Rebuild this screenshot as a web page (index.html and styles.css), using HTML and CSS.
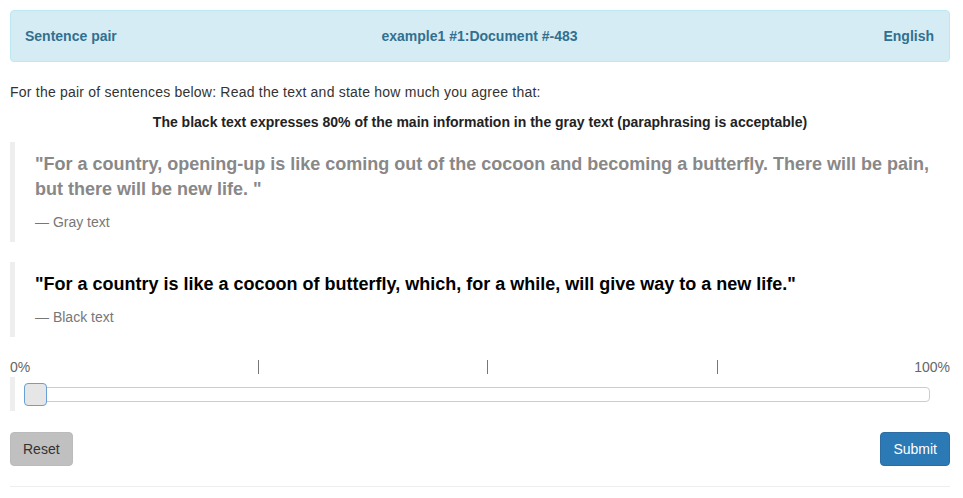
FILE: index.html
```html
<!DOCTYPE html>
<html>

<head>
    <title> Sentence pair </title>
    <link rel="stylesheet" href="styles.css">
</head>

<body>
    <div class="container">
        <div class="task-header">
            <span class="left">Sentence pair</span>
            <span class="middle">example1 #1:Document #-483</span>
            <span class="right">English</span>
        </div>

        <p class="intro">For the pair of sentences below: Read the text and state how much you agree that:</p>
        <p class="question">The black text expresses 80% of the main information in the gray text (paraphrasing is acceptable)</p>

        <blockquote class="quote gray">
            <p>"For a country, opening-up is like coming out of the cocoon and becoming a butterfly. There will be pain, but there will be new life. "</p>
            <footer>Gray text</footer>
        </blockquote>

        <blockquote class="quote black">
            <p>"For a country is like a cocoon of butterfly, which, for a while, will give way to a new life."</p>
            <footer>Black text</footer>
        </blockquote>

        <!-- slider scale -->
        <div class="scale-labels">
            <span>0%</span>
            <span><span class="tick"></span></span>
            <span><span class="tick"></span></span>
            <span><span class="tick"></span></span>
            <span>100%</span>
        </div>
        <div class="slider-row">
            <div class="track">
                <div class="thumb"></div>
            </div>
        </div>

        <div class="buttons">
            <button class="btn btn-reset">Reset</button>
            <button class="btn btn-submit">Submit</button>
        </div>

        <hr>
    </div>
</body>

</html>
```

FILE: styles.css
```css
body {
    margin: 0;
    padding: 0;
    background-color: white;
    color: #333;
    font-family: "Liberation Sans", Helvetica, Arial, sans-serif;
    font-size: 14px;
    line-height: 20px;
}

.container {
    width: 940px;
    padding: 10px;
}

.task-header {
    display: grid;
    grid-template-columns: 1fr 1fr 1fr;
    padding: 15px 15px 15px 14px;
    background-color: #d6ecf5;
    border: 1px solid #bce8f1;
    border-radius: 4px;
    color: #31708f;
    font-weight: bold;
}

.task-header .middle {
    text-align: center;
    white-space: nowrap;
}

.task-header .right {
    text-align: right;
}

.intro {
    margin: 20px 0 10px 0;
    letter-spacing: 0.22px;
}

.question {
    margin: 0 0 10px 0;
    text-align: center;
    font-weight: bold;
    color: #222;
}

.quote {
    margin: 0 0 20px 0;
    padding: 10px 20px;
    border-left: 5px solid #eee;
}

.quote p {
    margin: 0 0 10px 0;
    font-size: 18px;
    line-height: 25px;
    font-weight: bold;
}

.quote.gray p {
    color: #888;
}

.quote.black p {
    color: #000;
}

.quote footer {
    color: #777;
    font-size: 14px;
    line-height: 20px;
}

.quote footer:before {
    content: "\2014 \00A0";
}

.scale-labels {
    display: grid;
    grid-template-columns: 248px 229px 230px 1fr auto;
    color: #666;
}

.tick {
    display: inline-block;
    width: 1px;
    height: 14px;
    margin-top: 3px;
    vertical-align: top;
    background-color: #777;
}

.slider-row {
    display: flex;
    align-items: center;
    height: 34px;
    padding: 0 20px 0 9px;
    border-left: 5px solid #eee;
}

.track {
    position: relative;
    flex: 1;
    height: 13px;
    border: 1px solid #ccc;
    border-radius: 4px;
    background-color: white;
}

.thumb {
    position: absolute;
    left: -1px;
    top: -5px;
    width: 21px;
    height: 21px;
    background-color: #e6e6e6;
    border: 1px solid #6a9fd4;
    border-radius: 4px;
}

.buttons {
    display: flex;
    justify-content: space-between;
    margin-top: 21px;
}

.btn {
    padding: 6px 12px;
    font-family: inherit;
    font-size: 14px;
    line-height: 20px;
    border-radius: 4px;
    border: 1px solid transparent;
    cursor: pointer;
}

.btn-reset {
    background-color: #c0c0c0;
    border-color: #bbb;
    color: #333;
}

.btn-submit {
    background-color: #2b79b5;
    border-color: #2e6da4;
    color: white;
}

hr {
    margin: 20px 0 0 0;
    border: 0;
    border-top: 1px solid #eee;
}
```
